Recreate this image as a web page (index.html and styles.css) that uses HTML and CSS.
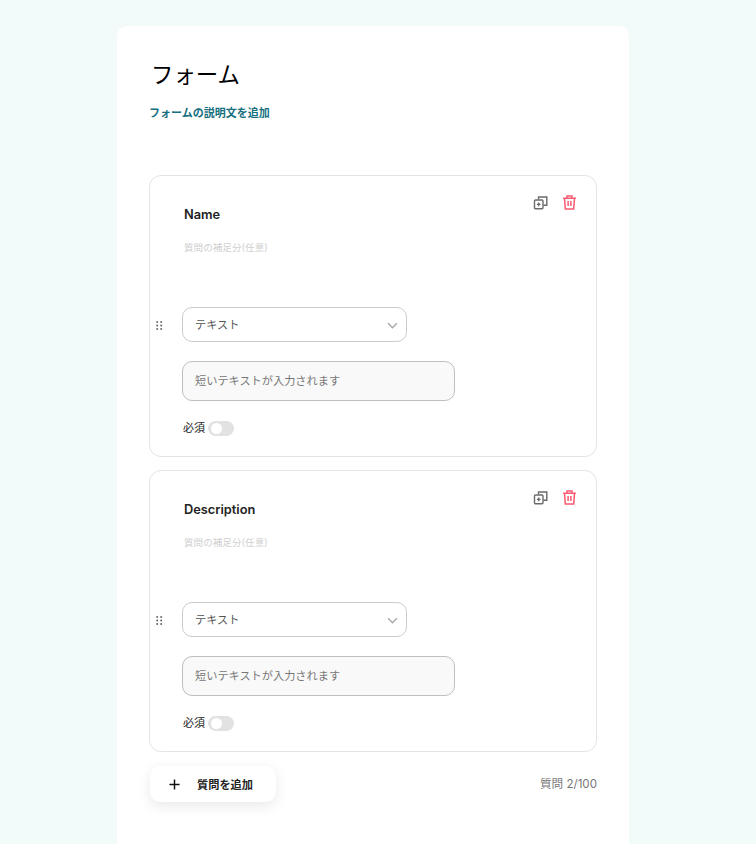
FILE: index.html
```html
<!DOCTYPE html>
<html lang="ja">
<head>
<meta charset="utf-8">
<title>フォーム</title>
<link rel="stylesheet" href="styles.css">
</head>
<body>
<main class="sheet">
  <h1 class="title">フォーム</h1>
  <p class="desc">フォームの説明文を追加</p>

  <section class="card">
    <div class="actions">
      <svg class="icon" viewBox="0 0 16 16" fill="none" stroke="#6b6b6b" stroke-width="1.4"><path d="M6.5 5.5V3h8.3v8.3H11.5"/><rect x="2.5" y="6" width="8.5" height="8.8" rx="1"/><path d="M6.7 8.6v3.6M4.9 10.4h3.6" stroke-width="1.4"/></svg>
      <svg class="icon" viewBox="0 0 16 16" fill="none" stroke="#fa5a70" stroke-width="1.5"><path d="M2.1 4.2h12.8M6 4V2.1h5V4M3.5 4.3l.8 10.6h8.4l.8-10.6M7.1 7.1v5M9.9 7.1v5"/></svg>
    </div>
    <h2 class="q-name">Name</h2>
    <p class="q-help">質問の補足分(任意)</p>
    <div class="type-row">
      <svg class="grip" viewBox="0 0 7 9" fill="#666"><circle cx="1.2" cy="1" r="1"/><circle cx="5.2" cy="1" r="1"/><circle cx="1.2" cy="4.5" r="1"/><circle cx="5.2" cy="4.5" r="1"/><circle cx="1.2" cy="8" r="1"/><circle cx="5.2" cy="8" r="1"/></svg>
      <div class="select">
        <span>テキスト</span>
        <svg class="chev" viewBox="0 0 12 8" fill="none" stroke="#aaa" stroke-width="1.8"><path d="M1 1.5l5 5 5-5"/></svg>
      </div>
    </div>
    <div class="answer"><span>短いテキストが入力されます</span></div>
    <div class="req"><span>必須</span><span class="toggle"><span class="knob"></span></span></div>
  </section>

  <section class="card">
    <div class="actions">
      <svg class="icon" viewBox="0 0 16 16" fill="none" stroke="#6b6b6b" stroke-width="1.4"><path d="M6.5 5.5V3h8.3v8.3H11.5"/><rect x="2.5" y="6" width="8.5" height="8.8" rx="1"/><path d="M6.7 8.6v3.6M4.9 10.4h3.6" stroke-width="1.4"/></svg>
      <svg class="icon" viewBox="0 0 16 16" fill="none" stroke="#fa5a70" stroke-width="1.5"><path d="M2.1 4.2h12.8M6 4V2.1h5V4M3.5 4.3l.8 10.6h8.4l.8-10.6M7.1 7.1v5M9.9 7.1v5"/></svg>
    </div>
    <h2 class="q-name">Description</h2>
    <p class="q-help">質問の補足分(任意)</p>
    <div class="type-row">
      <svg class="grip" viewBox="0 0 7 9" fill="#666"><circle cx="1.2" cy="1" r="1"/><circle cx="5.2" cy="1" r="1"/><circle cx="1.2" cy="4.5" r="1"/><circle cx="5.2" cy="4.5" r="1"/><circle cx="1.2" cy="8" r="1"/><circle cx="5.2" cy="8" r="1"/></svg>
      <div class="select">
        <span>テキスト</span>
        <svg class="chev" viewBox="0 0 12 8" fill="none" stroke="#aaa" stroke-width="1.8"><path d="M1 1.5l5 5 5-5"/></svg>
      </div>
    </div>
    <div class="answer"><span>短いテキストが入力されます</span></div>
    <div class="req"><span>必須</span><span class="toggle"><span class="knob"></span></span></div>
  </section>

  <div class="footer">
    <button class="add" type="button">
      <svg class="plus" viewBox="0 0 12 12" fill="none" stroke="#111" stroke-width="1.6"><path d="M6 .5v11M.5 6h11"/></svg>
      <span>質問を追加</span>
    </button>
    <span class="count">質問 2/100</span>
  </div>
</main>
</body>
</html>
```

FILE: styles.css
```css
* { box-sizing: border-box; }
html, body { height: 100%; }
body {
  margin: 0;
  height: 844px;
  overflow: hidden;
  background: #f2fbf9;
  font-family: Inter, "Noto Sans CJK JP", sans-serif;
  color: #1f1f1f;
}
.sheet {
  width: 512px;
  height: 818px;
  margin: 26px 0 0 117px;
  padding: 32px 32px 0;
  background: #fff;
  border-radius: 10px 10px 0 0;
}
.title {
  margin: 1px 0 0 2px;
  font-size: 22.4px;
  line-height: 32px;
  font-weight: 400;
  color: #000;
}
.desc {
  margin: 14px 0 0;
  font-size: 11px;
  line-height: 16px;
  font-weight: 700;
  color: #17707f;
}
.card {
  position: relative;
  height: 282px;
  margin-top: 13px;
  padding: 30px 0 0 32px;
  border: 1px solid #e4e4e4;
  border-radius: 12px;
}
.desc + .card { margin-top: 54px; }
.actions {
  position: absolute;
  top: 18px;
  right: 19px;
  display: flex;
  gap: 13px;
}
.icon { width: 16px; height: 16px; display: block; }
.q-name {
  margin: 0 0 0 2px;
  font-size: 12.8px;
  line-height: 18px;
  font-weight: 600;
  color: #222;
}
.q-help {
  margin: 17px 0 0 2px;
  font-size: 9.6px;
  line-height: 14px;
  color: #cfcfcf;
}
.type-row {
  position: relative;
  margin-top: 52px;
}
.grip {
  position: absolute;
  left: -26px;
  top: 14px;
  width: 7px;
  height: 9px;
}
.select {
  width: 225px;
  height: 35px;
  padding: 0 12px;
  display: flex;
  align-items: center;
  justify-content: space-between;
  border: 1px solid #c9ccd1;
  border-radius: 10px;
  font-size: 11.2px;
  color: #555;
}
.select span { margin-top: -2px; }
.chev { width: 11px; height: 7px; margin: 2px -4px 0 0; }
.answer {
  width: 273px;
  height: 40px;
  margin-top: 19px;
  padding: 0 12px;
  display: flex;
  align-items: center;
  background: #f9f9f9;
  border: 1px solid #bfbfbf;
  border-radius: 10px;
  font-size: 11.2px;
  color: #777;
}
.answer span { margin-top: -2px; }
.req {
  margin-top: 19px;
  display: flex;
  align-items: center;
  gap: 3px;
  font-size: 11px;
  line-height: 16px;
  color: #222;
}
.req span:first-child { margin-left: 1px; }
.toggle {
  width: 26px;
  height: 15px;
  padding: 2px;
  border-radius: 8px;
  background: #e2e2e2;
  display: block;
}
.knob {
  display: block;
  width: 11px;
  height: 11px;
  border-radius: 50%;
  background: #fff;
}
.footer {
  margin-top: 14px;
  display: flex;
  align-items: center;
  justify-content: space-between;
}
.add {
  width: 126px;
  height: 36px;
  margin-left: 1px;
  padding: 0 0 0 19px;
  display: flex;
  align-items: center;
  gap: 17px;
  background: #fff;
  border: 0;
  border-radius: 10px;
  box-shadow: 0 4px 14px rgba(0, 0, 0, .09);
  font: 700 11.2px Inter, "Noto Sans CJK JP", sans-serif;
  color: #222;
}
.plus { width: 11px; height: 11px; }
.count {
  padding-bottom: 2px;
  font-size: 11.6px;
  color: #777;
}
```
